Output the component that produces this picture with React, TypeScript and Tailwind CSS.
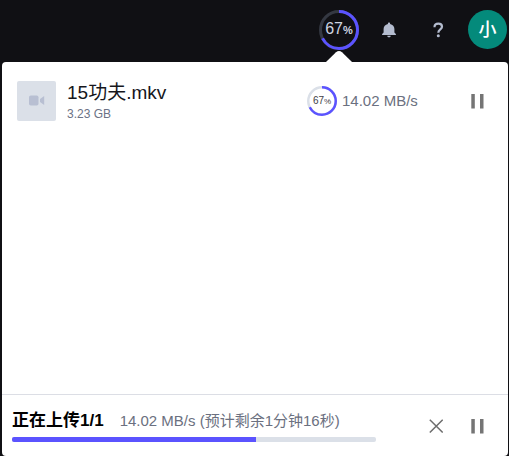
import React from "react";

function Ring({ size, stroke, percent, track }: { size: number; stroke: number; percent: number; track: string }) {
  const r = (size - stroke) / 2;
  const length = 2 * Math.PI * r;
  return (
    <svg width={size} height={size} className="-rotate-90" aria-hidden="true">
      <circle cx={size / 2} cy={size / 2} r={r} fill="none" stroke={track} strokeWidth={stroke} />
      <circle
        cx={size / 2}
        cy={size / 2}
        r={r}
        fill="none"
        stroke="#5b53ff"
        strokeWidth={stroke}
        strokeDasharray={`${(length * percent) / 100} ${length}`}
      />
    </svg>
  );
}

function PauseButton({ label }: { label: string }) {
  return (
    <button type="button" aria-label={label} className="flex size-6 shrink-0 items-center justify-center">
      <svg width="14" height="16" viewBox="0 0 14 16" fill="#757575" aria-hidden="true">
        <rect x="1.300" y="1" width="3.500" height="14.500" />
        <rect x="10" y="1" width="3.500" height="14.500" />
      </svg>
    </button>
  );
}

function Header() {
  return (
    <header className="flex h-[62px] items-start justify-end gap-[9px] pt-[10px] pr-[2px]">
      <button type="button" aria-label="67%" className="relative grid size-10 place-items-center text-[#ced4e0]">
        <Ring size={40} stroke={3} percent={67} track="#343842" />
        <span className="absolute inset-0 flex items-baseline justify-center text-base leading-[38px]">
          67<span className="text-[11px] font-bold">%</span>
        </span>
        <svg className="absolute top-[41px] left-[7px]" width="26" height="11" viewBox="0 0 26 11" fill="#fff" aria-hidden="true">
          <path d="M0 11 L10 1.3 Q13 -1.2 16 1.3 L26 11 Z" />
        </svg>
      </button>
      <button type="button" aria-label="通知" className="flex h-10 w-[41px] items-center justify-center">
        <svg width="16" height="16" viewBox="0 0 16 16" fill="#b4bccf" aria-hidden="true">
          <path d="M8 .5c.7 0 1.1.5 1.1 1.1v.5c2.7.6 4.300 2.400 4.300 4.900v3.500l1.500 1.600v.9H1.100v-.9l1.500-1.600V7c0-2.500 1.600-4.300 4.300-4.900v-.5C6.900 1 7.300.5 8 .5zM6.300 13.700h3.400c0 .9-.8 1.600-1.700 1.600s-1.700-.7-1.700-1.600z" />
        </svg>
      </button>
      <button type="button" aria-label="帮助" className="flex h-10 w-[41px] items-center justify-center">
        <svg width="12" height="16" viewBox="0 0 12 16" fill="none" aria-hidden="true">
          <path d="M1.500 5.200C1.500 2.900 3.200 1.700 5.300 1.700S9 2.900 9 4.800C9 7.500 5.300 7.300 5.300 10.700" stroke="#b4bccf" strokeWidth="2.200" />
          <circle cx="5.300" cy="13.700" r="1.500" fill="#b4bccf" />
        </svg>
      </button>
      <button type="button" className="size-[39px] rounded-full bg-[#048a7b] text-center text-[18px] leading-[38px] font-medium text-white">
        小
      </button>
    </header>
  );
}

function UploadItem() {
  return (
    <li className="flex items-start pt-[19px] pr-[19px] pl-[15px]">
      <div className="flex h-10 w-[39px] shrink-0 items-center justify-center rounded-[2px] bg-[#dbe0e8]">
        <svg width="16" height="12" viewBox="0 0 16 12" fill="#b8bfd2" aria-hidden="true">
          <rect x="0" y="0.500" width="9.500" height="10" rx="1.800" />
          <path d="M11 4L15.200 1V10L11 7Z" />
        </svg>
      </div>
      <div className="ml-[11px] min-w-0 flex-1">
        <p className="text-[19px] leading-6 text-[#16161c]">15功夫.mkv</p>
        <p className="text-[12px] leading-[18px] text-[#6b7285]">3.23 GB</p>
      </div>
      <div className="flex h-10 w-[158px] shrink-0 items-center gap-[5px]">
        <div className="relative size-[30px]">
          <Ring size={30} stroke={2.5} percent={67} track="#dbe0e8" />
          <span className="absolute inset-0 flex items-baseline justify-center text-[10px] leading-[30px] text-[#3d3d45]">
            67<span className="text-[8px]">%</span>
          </span>
        </div>
        <span className="text-[15px] leading-5 whitespace-nowrap text-[#6b7080]">14.02 MB/s</span>
      </div>
      <div className="flex h-10 items-center">
        <PauseButton label="暂停" />
      </div>
    </li>
  );
}

function UploadSummary() {
  return (
    <footer className="flex h-[62px] items-center border-t border-[#dcdee5] pr-[19px] pl-[10px]">
      <div className="mr-12 flex-1">
        <div className="flex items-baseline gap-4 whitespace-nowrap">
          <h2 className="text-[17px] leading-6 font-bold text-black">正在上传1/1</h2>
          <p className="text-[15px] leading-6 text-[#6b7080]">14.02 MB/s (预计剩余1分钟16秒)</p>
        </div>
        <div
          role="progressbar"
          aria-label="上传进度"
          aria-valuenow={67}
          aria-valuemin={0}
          aria-valuemax={100}
          className="mt-1 h-[5px] overflow-hidden rounded-[2px] bg-[#dbe0e8]"
        >
          <div className="h-full w-[67%] bg-[#5b53ff]" />
        </div>
      </div>
      <div className="flex gap-[17px]">
        <button type="button" aria-label="取消" className="flex size-6 items-center justify-center">
          <svg width="14" height="14" viewBox="0 0 14 14" fill="none" stroke="#6e6e6e" strokeWidth="1.500" aria-hidden="true">
            <path d="M.8.8L13.700 13.500M13.700.8L.8 13.500" />
          </svg>
        </button>
        <PauseButton label="全部暂停" />
      </div>
    </footer>
  );
}

export default function App() {
  return (
    <div className="flex h-screen flex-col bg-[#101014] font-['Liberation_Sans','Noto_Sans_CJK_SC',sans-serif]">
      <Header />
      <main className="mr-px ml-[2px] flex flex-1 flex-col rounded-[4px] bg-white">
        <ul className="flex-1">
          <UploadItem />
        </ul>
        <UploadSummary />
      </main>
    </div>
  );
}
